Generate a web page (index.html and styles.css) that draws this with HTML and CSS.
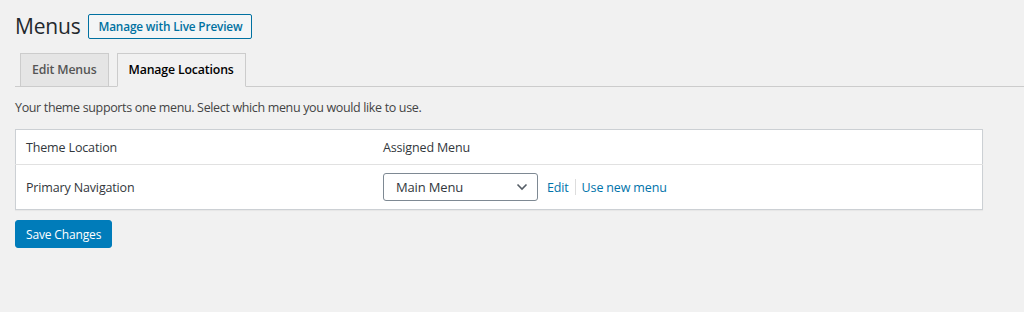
FILE: index.html
```html
<!DOCTYPE html>
<html lang="en">
<head>
    <meta charset="UTF-8">
    <title>Menus</title>
    <link rel="stylesheet" href="styles.css">
</head>
<body>
    <div class="wrap">
        <div class="title-row">
            <h1>Menus</h1>
            <a class="page-action" href="#">Manage with Live Preview</a>
        </div>

        <nav class="tabs">
            <a class="tab" href="#">Edit Menus</a>
            <a class="tab tab-active" href="#">Manage Locations</a>
        </nav>

        <p class="intro">Your theme supports one menu. Select which menu you would like to use.</p>

        <table class="locations">
            <thead>
                <tr>
                    <th class="col-location">Theme Location</th>
                    <th>Assigned Menu</th>
                </tr>
            </thead>
            <tbody>
                <tr>
                    <td class="col-location">Primary Navigation</td>
                    <td>
                        <div class="assign">
                            <div class="select">
                                <span>Main Menu</span>
                                <svg width="12" height="8" viewBox="0 0 12 8"><path d="M1.5 1.5 L6 6 L10.5 1.5" fill="none" stroke="#555d66" stroke-width="1.6"/></svg>
                            </div>
                            <a class="link" href="#">Edit</a>
                            <span class="sep"></span>
                            <a class="link" href="#">Use new menu</a>
                        </div>
                    </td>
                </tr>
            </tbody>
        </table>

        <button class="save" type="button">Save Changes</button>
    </div>
</body>
</html>
```

FILE: styles.css
```css
body {
    margin: 0;
    background-color: #f1f1f1;
    color: #444;
    font-family: "Open Sans", "Noto Sans", sans-serif;
    font-size: 12.5px;
    letter-spacing: -0.15px;
}

.wrap {
    padding: 0 41px 0 15px;
}

.title-row {
    display: flex;
    align-items: center;
    gap: 8px;
    padding-top: 13px;
    height: 26px;
}

h1 {
    margin: 0;
    font-size: 21px;
    font-weight: 400;
    color: #23282d;
    line-height: 26px;
    letter-spacing: -0.2px;
}

.page-action {
    display: inline-block;
    box-sizing: border-box;
    height: 25px;
    line-height: 23px;
    padding: 0 9px;
    border: 1px solid #0071a1;
    border-radius: 2px;
    background-color: #f3f5f6;
    color: #0071a1;
    font-size: 11.8px;
    font-weight: 600;
    text-decoration: none;
}

.tabs {
    display: flex;
    gap: 8px;
    margin: 14px -41px 0 0;
    padding-left: 5px;
    border-bottom: 1px solid #ccc;
    height: 33px;
}

.tab {
    box-sizing: border-box;
    height: 34px;
    padding: 0 11px;
    line-height: 32px;
    border: 1px solid #ccc;
    background-color: #e5e5e5;
    color: #555;
    font-size: 12.3px;
    font-weight: 600;
    text-decoration: none;
}

.tab-active {
    background-color: #f1f1f1;
    border-bottom-color: #f1f1f1;
    color: #000;
}

.intro {
    margin: 13px 0 13px;
    color: #444;
    line-height: 16px;
    letter-spacing: -0.35px;
}

.locations {
    width: 100%;
    border-collapse: collapse;
    background-color: #fff;
    border: 1px solid #ccd0d4;
    box-shadow: 0 1px 1px rgba(0, 0, 0, 0.04);
}

.locations th {
    text-align: left;
    font-weight: 400;
    color: #32373c;
    height: 34px;
    padding: 0 10px;
    border-bottom: 1px solid #e1e1e1;
}

.locations td {
    height: 44px;
    padding: 0 10px;
    color: #32373c;
    vertical-align: middle;
}

.locations .col-location {
    width: 337px;
}

.assign {
    display: flex;
    align-items: center;
}

.select {
    display: flex;
    align-items: center;
    justify-content: space-between;
    box-sizing: border-box;
    width: 155px;
    height: 28px;
    padding: 0 9px 0 12px;
    border: 1px solid #7e8993;
    border-radius: 3px;
    background-color: #fff;
    color: #32373c;
    font-size: 13px;
}

.link {
    color: #0073aa;
    text-decoration: none;
}

.assign .link:first-of-type {
    margin-left: 9px;
}

.sep {
    display: inline-block;
    width: 1px;
    height: 16px;
    background-color: #ddd;
    margin: 0 6px;
}

.save {
    margin-top: 10px;
    height: 28px;
    padding: 0 10px;
    border: 1px solid #007cba;
    border-radius: 3px;
    background-color: #007cba;
    color: #fff;
    font-family: inherit;
    font-size: 12px;
    letter-spacing: -0.15px;
    cursor: pointer;
}
```
